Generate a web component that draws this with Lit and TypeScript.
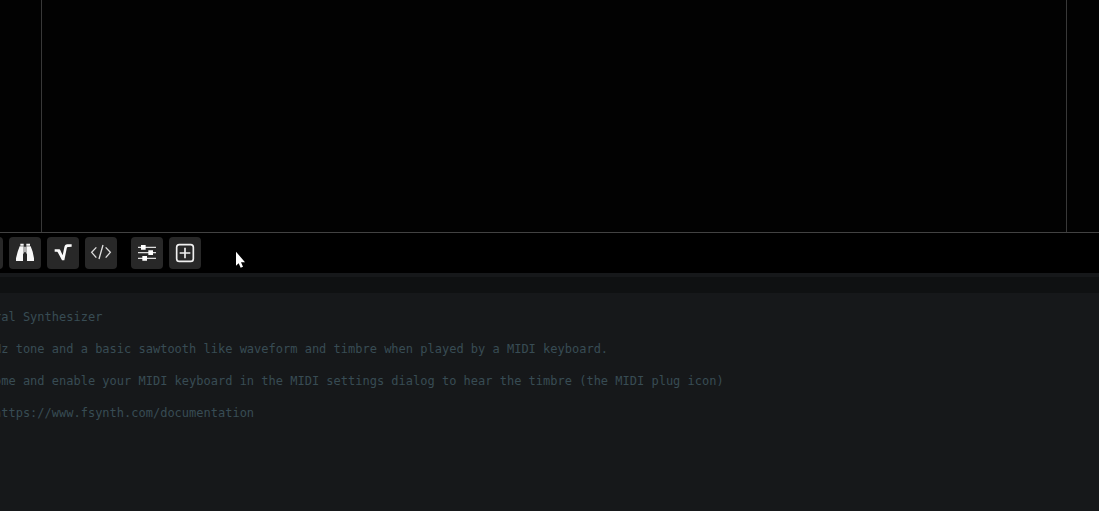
import { LitElement, html, css, svg } from "lit";
import { customElement } from "lit/decorators.js";

const icons = {
  binoculars: svg`<g fill="#f8f8f8">
    <path d="M34 20h10v6H34zM32 28h12v20l-2 4v20H21v-8l5-20z"/>
    <path d="M52 20h11v6H52zM52 28h13l6 16 4 20v8H54V52l-2-4z"/>
    <path d="M45 29h6v17h-6z" fill="#b0b0b0"/></g>`,
  root: svg`<path d="M23 37h12c4 0 5 2 6 5l6 13 5-24c1-6 4-9 9-9h13v7l-9 1c-4 0-5 1-6 5l-7 35h-7L33 47c-1-3-2-3-4-3h-6z" fill="#fafafa"/>`,
  code: svg`<path d="M34 31L20 46l14 16M62 31l14 15-14 16M54 24L42 66" fill="none" stroke="#dedede" stroke-width="4"/>`,
  sliders: svg`<path d="M21 31h54M21 47h54M21 64h54" stroke="#dcdcdc" stroke-width="4"/>
    <path d="M30 24h14v14H30zM52 40h14v14H52zM34 57h14v14H34z" fill="#fff"/>`,
  add: svg`<rect x="23" y="23" width="50" height="50" rx="8" fill="none" stroke="#f0f0f0" stroke-width="5"/>
    <path d="M32 48h32M48 32v32" stroke="#f0f0f0" stroke-width="5"/>`,
};

const notes = [
  "ral Synthesizer",
  "",
  "Hz tone and a basic sawtooth like waveform and timbre when played by a MIDI keyboard.",
  "",
  "ome and enable your MIDI keyboard in the MIDI settings dialog to hear the timbre (the MIDI plug icon)",
  "",
  "https://www.fsynth.com/documentation",
].join("\n");

@customElement("app-root")
export class AppRoot extends LitElement {
  static styles = css`
    :host {
      display: flex;
      flex-direction: column;
      position: relative;
      height: 100vh;
      overflow: hidden;
      background: #000;
    }
    .canvas {
      flex: 1;
      display: flex;
      min-height: 0;
      padding: 0 32px 0 41px;
      background: #020202;
      border-bottom: 1px solid #424242;
    }
    .frame {
      flex: 1;
      border: solid #383838;
      border-width: 0 1px;
    }
    .toolbar {
      display: flex;
      gap: 14px;
      padding: 4px 0;
      margin-left: -29px;
    }
    .group {
      display: flex;
      gap: 6px;
    }
    .tool {
      width: 32px;
      height: 32px;
      padding: 0;
      border: 0;
      border-radius: 4px;
      background: #282828;
    }
    .icon {
      display: block;
      width: 32px;
      height: 32px;
    }
    .editor {
      border-top: 4px solid #16181a;
      padding-top: 16px;
      background: #0f1112;
    }
    .code {
      display: block;
      box-sizing: border-box;
      width: calc(100% + 6px);
      margin: 0 0 0 -6px;
      padding: 16px 0 10px;
      border: 0;
      outline: 0;
      resize: none;
      overflow: hidden;
      white-space: pre;
      background: #16181a;
      color: #384c54;
      font: 12px/16px "DejaVu Sans Mono", monospace;
    }
    .pointer {
      position: absolute;
      left: 235px;
      top: 251px;
      width: 10px;
      height: 17px;
      pointer-events: none;
    }
  `;

  private tool(label: string, icon: unknown) {
    return html`<button class="tool" type="button" aria-label=${label}>
      <svg class="icon" viewBox="0 0 96 96" aria-hidden="true">${icon}</svg>
    </button>`;
  }

  render() {
    return html`
      <main class="canvas"><div class="frame"></div></main>
      <nav class="toolbar" aria-label="Tools">
        <div class="group">
          ${this.tool("Tool", null)}
          ${this.tool("Find", icons.binoculars)}
          ${this.tool("Formula", icons.root)}
          ${this.tool("Code", icons.code)}
        </div>
        <div class="group">
          ${this.tool("Settings", icons.sliders)}
          ${this.tool("Add", icons.add)}
        </div>
      </nav>
      <section class="editor">
        <textarea class="code" rows="12" spellcheck="false" aria-label="Code editor" .value=${notes}></textarea>
      </section>
      <svg class="pointer" viewBox="0 0 30 51" aria-hidden="true">
        <path d="M3 2v42l8-7 6 13 7-3-6-13h12z" fill="#fff"/>
      </svg>
    `;
  }
}
